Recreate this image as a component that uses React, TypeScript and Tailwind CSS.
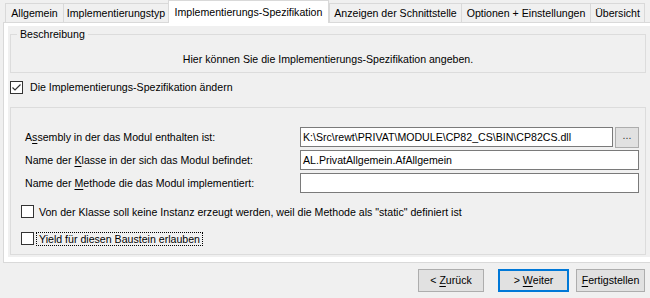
import React from "react";

const tabs = [
  { label: "Allgemein", w: "w-[58px]" },
  { label: "Implementierungstyp", w: "w-[105px]" },
  { label: "Implementierungs-Spezifikation", w: "w-[161px]", active: true },
  { label: "Anzeigen der Schnittstelle", w: "w-[132px]" },
  { label: "Optionen + Einstellungen", w: "w-[129px]" },
  { label: "Übersicht", w: "w-[55px]" },
];

function CheckBox({ checked }: { checked?: boolean }) {
  return (
    <span className="flex h-[13px] w-[13px] shrink-0 items-center justify-center border border-[#333333] bg-white">
      {checked && (
        <svg width="11" height="11" viewBox="0 0 11 11">
          <polyline points="1.5,5.5 4,8 9.5,2.5" fill="none" stroke="#333333" strokeWidth="1.2" />
        </svg>
      )}
    </span>
  );
}

function Field({ label, value, browse }: { label: React.ReactNode; value?: string; browse?: boolean }) {
  return (
    <div className="flex h-[20px] items-start">
      <div className="flex h-[20px] w-[289px] items-center pl-[14px]">{label}</div>
      <div className="flex h-[20px] flex-1 items-center border border-[#7a7a7a] bg-white pl-[2px]">{value}</div>
      {browse && (
        <button className="ml-[2px] flex h-[21px] w-[24px] items-center justify-center border border-[#adadad] bg-[#e1e1e1] pb-[4px] text-[#333]">
          ...
        </button>
      )}
    </div>
  );
}

export default function App() {
  return (
    <div className="h-[298px] w-[650px] overflow-hidden whitespace-nowrap bg-[#f0f0f0] font-['Liberation_Sans',Arial,sans-serif] text-[10.6px] leading-[15px] text-black">
      {/* tab strip */}
      <div className="relative z-10 flex h-[22px] items-end pl-[5px]">
        {tabs.map((t) =>
          t.active ? (
            <div
              key={t.label}
              className={`${t.w} -mb-px flex h-[23px] items-start justify-center border-x border-t border-[#d9d9d9] bg-white pt-[4px]`}
            >
              {t.label}
            </div>
          ) : (
            <div
              key={t.label}
              className={`${t.w} flex h-[19px] items-center justify-center border-l border-t border-[#d9d9d9] pt-[1px] last:border-r`}
            >
              {t.label}
            </div>
          )
        )}
      </div>

      {/* tab page */}
      <div className="ml-[3px] h-[241px] w-[649px] border border-[#d9d9d9] bg-white pb-[5px] pl-[4px] pt-[3px]">
        <div className="h-full bg-[#f0f0f0] px-[2px] pt-[1px]">
          <fieldset className="w-[636px] border border-[#dcdcdc] pb-[5px] pt-[10px]">
            <legend className="ml-[6px] px-[3px]">Beschreibung</legend>
            <div className="text-center">Hier können Sie die Implementierungs-Spezifikation angeben.</div>
          </fieldset>

          <div className="mt-[7px] flex h-[15px] items-center gap-[7px]">
            <CheckBox checked />
            <span>Die Implementierungs-Spezifikation ändern</span>
          </div>

          <div className="mt-[12px] h-[148px] w-[636px] border border-[#dcdcdc] pr-[6px] pt-[19px]">
            <div className="flex flex-col gap-[3px]">
              <Field
                label={
                  <span>
                    A<span className="underline underline-offset-2">s</span>sembly in der das Modul enthalten ist:
                  </span>
                }
                value="K:\Src\rewt\PRIVAT\MODULE\CP82_CS\BIN\CP82CS.dll"
                browse
              />
              <Field
                label={
                  <span>
                    Name der <span className="underline underline-offset-2">K</span>lasse in der sich das Modul befindet:
                  </span>
                }
                value="AL.PrivatAllgemein.AfAllgemein"
              />
              <Field
                label={
                  <span>
                    Name der <span className="underline underline-offset-2">M</span>ethode die das Modul implementiert:
                  </span>
                }
              />
            </div>

            <div className="mt-[11px] flex h-[15px] items-center pl-[10px]">
              <CheckBox />
              <span className="ml-[2px] border border-transparent px-[2px] leading-[12px]">
                Von der Klasse soll keine Instanz erzeugt werden, weil die Methode als "static" definiert ist
              </span>
            </div>
            <div className="mt-[12px] flex h-[15px] items-center pl-[10px]">
              <CheckBox />
              <span className="ml-[2px] border border-dotted border-black px-[2px] leading-[12px]">
                Yield für diesen Baustein erlauben
              </span>
            </div>
          </div>
        </div>
      </div>

      {/* wizard buttons */}
      <div className="mt-[6px] flex justify-end pr-[5px]">
        <button className="flex h-[23px] w-[66px] items-center justify-center border border-[#adadad] bg-[#e1e1e1]">
          &lt;&nbsp;<span className="underline underline-offset-2">Z</span>urück
        </button>
        <button className="ml-[14px] flex h-[23px] w-[71px] items-center justify-center border-2 border-[#0078d7] bg-[#e1e1e1]">
          &gt;&nbsp;<span className="underline underline-offset-2">W</span>eiter
        </button>
        <button className="ml-[7px] flex h-[23px] w-[69px] items-center justify-center border border-[#adadad] bg-[#e1e1e1]">
          <span className="underline underline-offset-2">F</span>ertigstellen
        </button>
      </div>
    </div>
  );
}
